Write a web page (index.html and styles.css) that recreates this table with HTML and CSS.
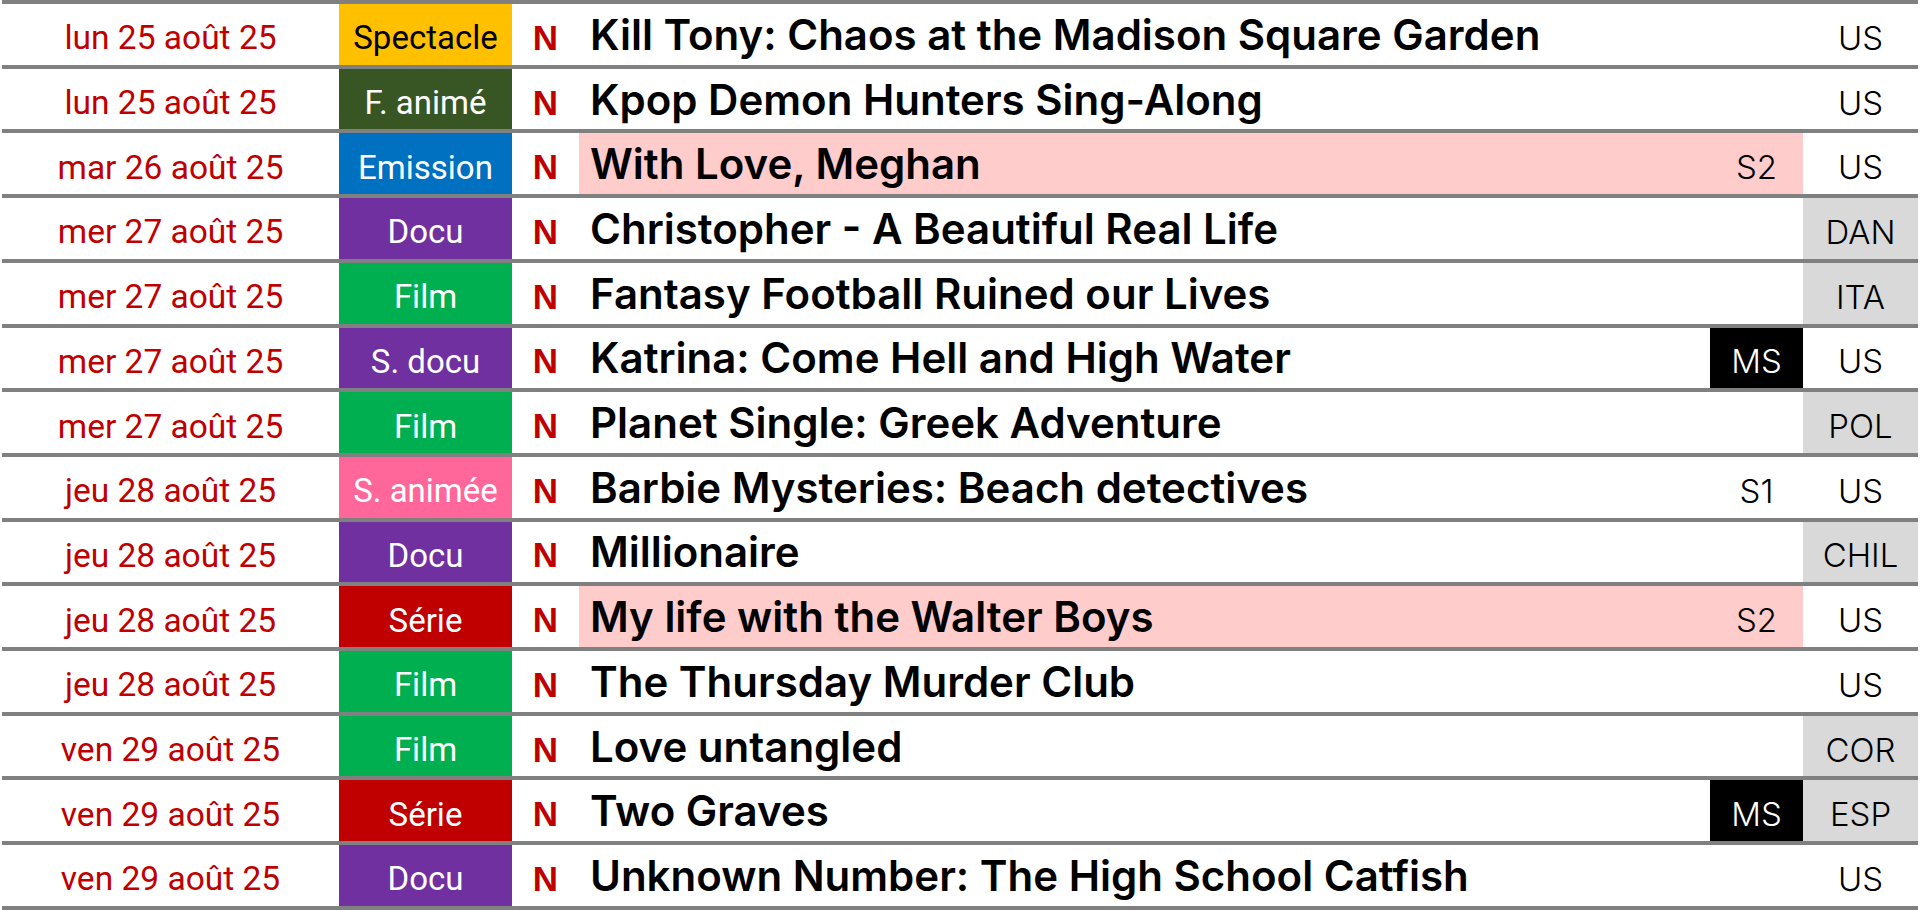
FILE: index.html
```html
<!DOCTYPE html>
<html lang="fr">
<head>
<meta charset="utf-8">
<title>Sorties</title>
<link rel="stylesheet" href="styles.css">
</head>
<body>
<div class="sheet">
  <div class="row"><div class="date">lun 25 août 25</div><div class="genre g-spectacle">Spectacle</div><div class="net">N</div><div class="title">Kill Tony: Chaos at the Madison Square Garden</div><div class="tag"></div><div class="country">US</div></div>
  <div class="row"><div class="date">lun 25 août 25</div><div class="genre g-fanime">F. animé</div><div class="net">N</div><div class="title">Kpop Demon Hunters Sing-Along</div><div class="tag"></div><div class="country">US</div></div>
  <div class="row"><div class="date">mar 26 août 25</div><div class="genre g-emission">Emission</div><div class="net">N</div><div class="title hl">With Love, Meghan</div><div class="tag hl">S2</div><div class="country">US</div></div>
  <div class="row"><div class="date">mer 27 août 25</div><div class="genre g-docu">Docu</div><div class="net">N</div><div class="title">Christopher - A Beautiful Real Life</div><div class="tag"></div><div class="country foreign">DAN</div></div>
  <div class="row"><div class="date">mer 27 août 25</div><div class="genre g-film">Film</div><div class="net">N</div><div class="title">Fantasy Football Ruined our Lives</div><div class="tag"></div><div class="country foreign">ITA</div></div>
  <div class="row"><div class="date">mer 27 août 25</div><div class="genre g-docu">S. docu</div><div class="net">N</div><div class="title">Katrina: Come Hell and High Water</div><div class="tag ms">MS</div><div class="country">US</div></div>
  <div class="row"><div class="date">mer 27 août 25</div><div class="genre g-film">Film</div><div class="net">N</div><div class="title">Planet Single: Greek Adventure</div><div class="tag"></div><div class="country foreign">POL</div></div>
  <div class="row"><div class="date">jeu 28 août 25</div><div class="genre g-sanimee">S. animée</div><div class="net">N</div><div class="title">Barbie Mysteries: Beach detectives</div><div class="tag">S1</div><div class="country">US</div></div>
  <div class="row"><div class="date">jeu 28 août 25</div><div class="genre g-docu">Docu</div><div class="net">N</div><div class="title">Millionaire</div><div class="tag"></div><div class="country foreign">CHIL</div></div>
  <div class="row"><div class="date">jeu 28 août 25</div><div class="genre g-serie">Série</div><div class="net">N</div><div class="title hl">My life with the Walter Boys</div><div class="tag hl">S2</div><div class="country">US</div></div>
  <div class="row"><div class="date">jeu 28 août 25</div><div class="genre g-film">Film</div><div class="net">N</div><div class="title">The Thursday Murder Club</div><div class="tag"></div><div class="country">US</div></div>
  <div class="row"><div class="date">ven 29 août 25</div><div class="genre g-film">Film</div><div class="net">N</div><div class="title">Love untangled</div><div class="tag"></div><div class="country foreign">COR</div></div>
  <div class="row"><div class="date">ven 29 août 25</div><div class="genre g-serie">Série</div><div class="net">N</div><div class="title">Two Graves</div><div class="tag ms">MS</div><div class="country foreign">ESP</div></div>
  <div class="row"><div class="date">ven 29 août 25</div><div class="genre g-docu">Docu</div><div class="net">N</div><div class="title">Unknown Number: The High School Catfish</div><div class="tag"></div><div class="country">US</div></div>
</div>
</body>
</html>
```

FILE: styles.css
```css
html, body {
  margin: 0;
  padding: 0;
  background: #ffffff;
  overflow: hidden;
}

.sheet {
  margin: 0 2px;
  border-top: 4px solid #808080;
}

.row {
  display: grid;
  grid-template-columns: 337px 173px 67px 1fr 93px 115px;
  height: 60.71px;
  border-bottom: 4px solid #808080;
}

.row > div {
  display: flex;
  align-items: center;
  white-space: nowrap;
  overflow: hidden;
  box-sizing: border-box;
}

.date {
  justify-content: center;
  padding-top: 7px;
  font-family: Roboto, "Liberation Sans", sans-serif;
  font-size: 33.5px;
  color: #c00000;
}

.genre {
  justify-content: center;
  padding-top: 7px;
  font-family: Roboto, "Liberation Sans", sans-serif;
  font-size: 33px;
  color: #ffffff;
}

.g-spectacle { background: #ffc000; color: #000000; }
.g-fanime { background: #375623; }
.g-emission { background: #0070c0; }
.g-docu { background: #7030a0; }
.g-film { background: #00b050; }
.g-sanimee { background: #ff6699; }
.g-serie { background: #c00000; }

.net {
  justify-content: center;
  padding-top: 7px;
  font-family: "Liberation Sans", Arial, sans-serif;
  font-weight: 700;
  font-size: 35px;
  color: #c00000;
}

.title {
  padding-left: 11px;
  font-family: Inter, "Noto Sans", sans-serif;
  font-weight: 600;
  font-size: 42px;
  color: #000000;
}

.tag, .country {
  justify-content: center;
  padding-top: 7px;
  font-family: Inter, "Noto Sans", sans-serif;
  font-weight: 300;
  font-size: 33px;
  color: #000000;
}

.hl { background: #ffcccc; }
.ms { background: #000000; color: #ffffff; }
.foreign { background: #d9d9d9; }
```
